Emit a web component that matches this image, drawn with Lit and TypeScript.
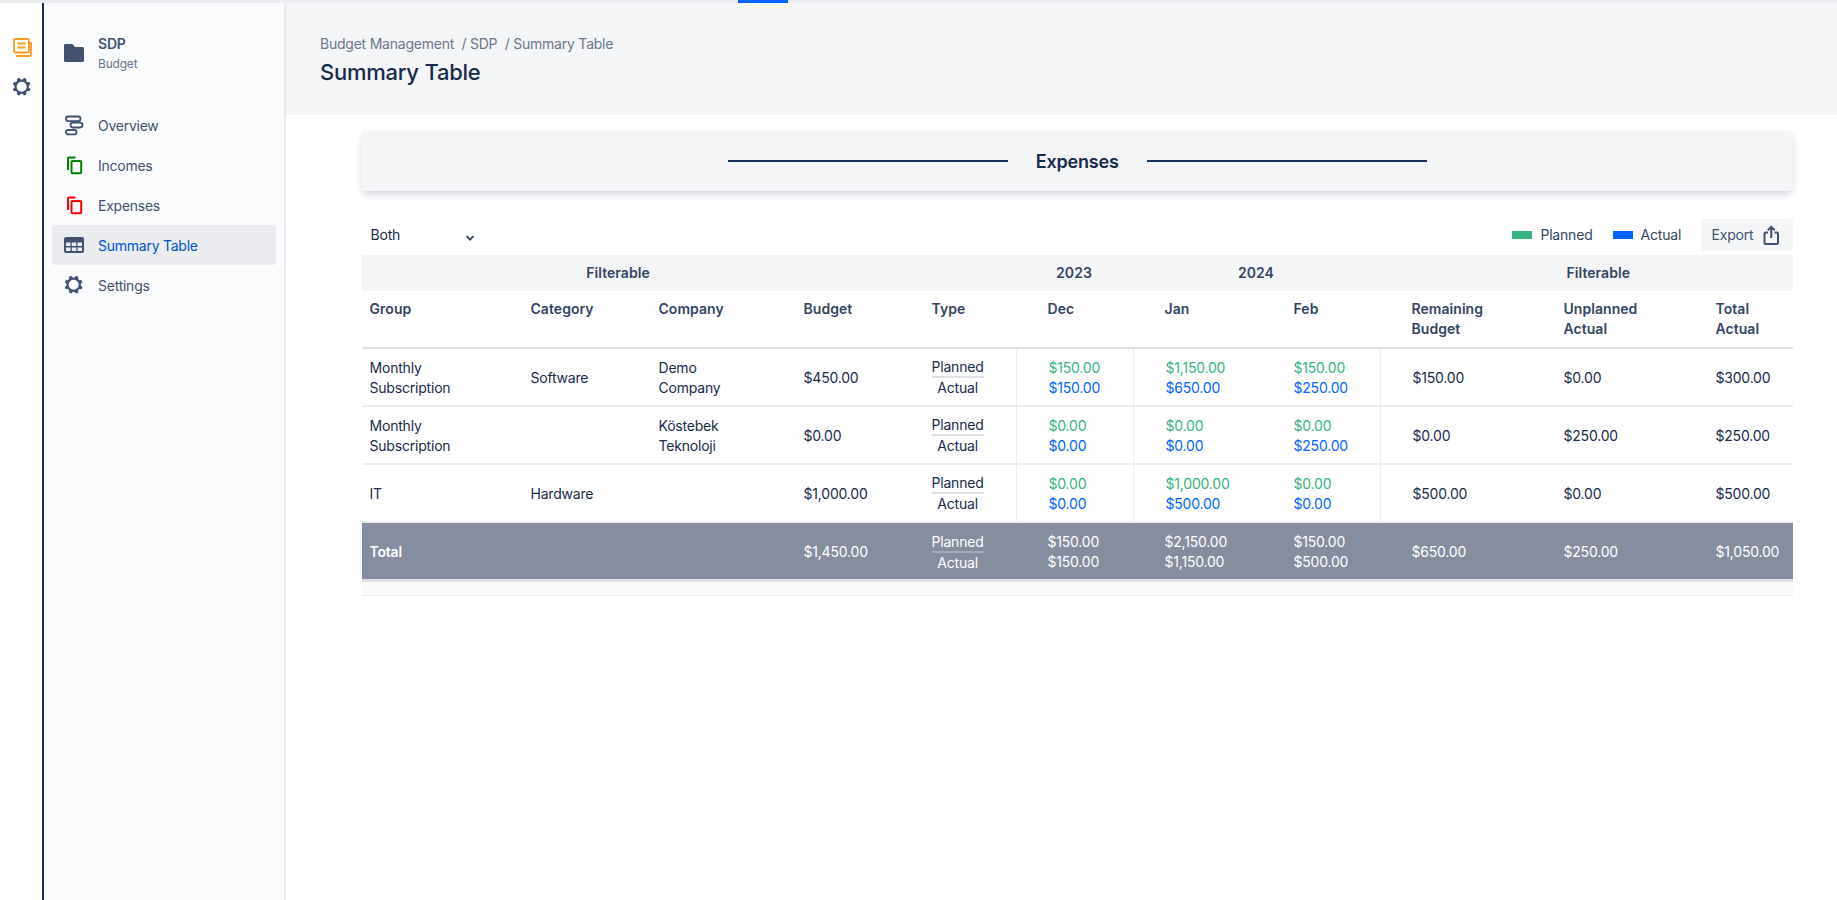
import { LitElement, html, css } from 'lit';
import { customElement } from 'lit/decorators.js';

interface Row {
  group: string[];
  category: string;
  company: string[];
  budget: string;
  dec: [string, string];
  jan: [string, string];
  feb: [string, string];
  remaining: string;
  unplanned: string;
  actual: string;
}

const ROWS: Row[] = [
  {
    group: ['Monthly', 'Subscription'],
    category: 'Software',
    company: ['Demo', 'Company'],
    budget: '$450.00',
    dec: ['$150.00', '$150.00'],
    jan: ['$1,150.00', '$650.00'],
    feb: ['$150.00', '$250.00'],
    remaining: '$150.00',
    unplanned: '$0.00',
    actual: '$300.00',
  },
  {
    group: ['Monthly', 'Subscription'],
    category: '',
    company: ['Köstebek', 'Teknoloji'],
    budget: '$0.00',
    dec: ['$0.00', '$0.00'],
    jan: ['$0.00', '$0.00'],
    feb: ['$0.00', '$250.00'],
    remaining: '$0.00',
    unplanned: '$250.00',
    actual: '$250.00',
  },
  {
    group: ['IT'],
    category: 'Hardware',
    company: [],
    budget: '$1,000.00',
    dec: ['$0.00', '$0.00'],
    jan: ['$1,000.00', '$500.00'],
    feb: ['$0.00', '$0.00'],
    remaining: '$500.00',
    unplanned: '$0.00',
    actual: '$500.00',
  },
];

const TOTAL: Row = {
  group: ['Total'],
  category: '',
  company: [],
  budget: '$1,450.00',
  dec: ['$150.00', '$150.00'],
  jan: ['$2,150.00', '$1,150.00'],
  feb: ['$150.00', '$500.00'],
  remaining: '$650.00',
  unplanned: '$250.00',
  actual: '$1,050.00',
};

const COLS = [161, 128, 145, 128, 92, 117, 129, 118, 176, 152, 85.5];

const gear = html`<svg class="icon" viewBox="0 0 24 24">
  <path
    fill="#42526E"
    fill-rule="evenodd"
    d="M11.701 16.7a5.002 5.002 0 110-10.003 5.002 5.002 0 010 10.004m8.368-3.117a1.995 1.995 0 01-1.346-1.885c0-.876.563-1.613 1.345-1.885a.48.48 0 00.315-.574 8.947 8.947 0 00-.836-1.993.477.477 0 00-.598-.195 2.04 2.04 0 01-1.29.08 1.988 1.988 0 01-1.404-1.395 2.04 2.04 0 01.076-1.297.478.478 0 00-.196-.597 8.98 8.98 0 00-1.975-.826.479.479 0 00-.574.314 1.995 1.995 0 01-1.885 1.346 1.994 1.994 0 01-1.884-1.345.482.482 0 00-.575-.315c-.708.2-1.379.485-2.004.842a.47.47 0 00-.198.582A2.002 2.002 0 014.445 7.06a.478.478 0 00-.595.196 8.946 8.946 0 00-.833 1.994.48.48 0 00.308.572 1.995 1.995 0 011.323 1.877c0 .867-.552 1.599-1.324 1.877a.479.479 0 00-.308.57 8.99 8.99 0 00.723 1.79.477.477 0 00.624.194c.595-.273 1.343-.264 2.104.238.117.077.225.185.302.3.527.8.512 1.58.198 2.188a.473.473 0 00.168.628 8.946 8.946 0 002.11.897.474.474 0 00.57-.313 1.995 1.995 0 011.886-1.353c.878 0 1.618.567 1.887 1.353a.475.475 0 00.57.313 8.964 8.964 0 002.084-.883.473.473 0 00.167-.631c-.318-.608-.337-1.393.191-2.195.077-.116.185-.225.302-.302.772-.511 1.527-.513 2.125-.23a.477.477 0 00.628-.19 8.925 8.925 0 00.728-1.793.478.478 0 00-.314-.573"
  />
</svg>`;

const docs = html`<svg class="icon" viewBox="0 0 24 24" fill="none" stroke="#FF991F" stroke-width="1.800">
  <rect x="4" y="4" width="15" height="13.500" rx="1.500" />
  <path d="M7.500 8.500h8M7.500 12.500h8" />
  <path d="M21 7v12.500a1.500 1.500 0 0 1-1.500 1.500H6" />
</svg>`;

const folder = html`<svg class="icon" viewBox="0 0 24 24">
  <path fill="#42526E" d="M3.500 3h6.200c.5 0 .9.2 1.200.6L13 6h7.500c.8 0 1.500.7 1.500 1.500v12c0 .8-.7 1.500-1.500 1.500h-17C2.700 21 2 20.300 2 19.500v-15C2 3.700 2.700 3 3.500 3z" />
</svg>`;

const overview = html`<svg class="icon" viewBox="0 0 24 24" fill="none" stroke="#42526E" stroke-width="1.800">
  <rect x="4" y="3.500" width="14.500" height="4.600" rx="2.300" />
  <rect x="8.500" y="9.700" width="12" height="4.800" rx="2.400" />
  <rect x="4" y="17" width="10.500" height="4.400" rx="2.200" />
</svg>`;

const pages = (color: string) => html`<svg class="icon" viewBox="0 0 24 24" fill="none" stroke=${color} stroke-width="2">
  <rect x="9.500" y="8" width="9.700" height="12.300" rx="1" />
  <path d="M6 17V5.500a1 1 0 0 1 1-1h6.500" />
</svg>`;

const grid = html`<svg class="icon" viewBox="0 0 24 24">
  <rect x="2" y="4" width="20" height="16" rx="2" fill="#42526E" />
  <path
    fill="#EBECF0"
    d="M4 9.500h4.500V13H4zM9.800 9.500h4.500V13H9.800zM15.500 9.500H20V13h-4.500zM4 14.500h4.500V18H4zM9.800 14.500h4.500V18H9.800zM15.500 14.500H20V18h-4.500z"
  />
</svg>`;

const share = html`<svg class="icon" viewBox="0 0 24 24" fill="none" stroke="#42526E" stroke-width="2">
  <path d="M8 9.500H5.500a1 1 0 0 0-1 1V20a1 1 0 0 0 1 1H17a1 1 0 0 0 1-1v-9.500a1 1 0 0 0-1-1h-2.500" />
  <path d="M11.250 15V4M7.800 7.200l3.450-3.400 3.450 3.400" />
</svg>`;

@customElement('app-root')
export class AppRoot extends LitElement {
  static styles = css`
    :host {
      display: block;
      height: 900px;
      overflow: hidden;
      background: #fff;
      color: #172b4d;
      font-family: Inter, 'Liberation Sans', sans-serif;
      font-size: 14px;
      line-height: 20px;
      letter-spacing: -0.2px;
    }
    .topbar {
      height: 3px;
      background: #ebecf0;
      padding-left: 738px;
    }
    .topbar i {
      display: block;
      width: 50px;
      height: 3px;
      background: #0065ff;
    }
    .shell {
      display: flex;
      height: 897px;
    }
    .icon {
      display: block;
      flex: none;
      width: 24px;
      height: 24px;
    }
    .rail {
      flex: none;
      width: 32px;
      padding: 32px 0 0 10px;
      border-right: 2px solid #1b3158;
      display: flex;
      flex-direction: column;
      gap: 16px;
    }
    .side {
      flex: none;
      box-sizing: border-box;
      width: 242px;
      padding: 31px 8px 0;
      background: #fafbfc;
      border-right: 2px solid #ebecf0;
    }
    .project {
      display: flex;
      align-items: flex-start;
      gap: 12px;
      padding-left: 10px;
      margin-bottom: 33px;
    }
    .project .icon {
      margin-top: 7px;
    }
    .project b {
      display: block;
      font-weight: 600;
      color: #42526e;
    }
    .project span {
      display: block;
      margin-top: 2px;
      font-size: 12px;
      line-height: 16px;
      color: #6b778c;
    }
    .nav {
      display: flex;
      align-items: center;
      gap: 12px;
      height: 40px;
      padding-left: 10px;
      border-radius: 3px;
      color: #42526e;
      letter-spacing: -0.25px;
    }
    .nav span {
      padding-top: 1px;
    }
    .nav.active {
      background: #ebecf0;
      color: #0052cc;
    }
    .main {
      flex: 1;
      min-width: 0;
    }
    .head {
      height: 112px;
      box-sizing: border-box;
      padding: 31px 34px 0;
      background: #f4f5f7;
    }
    .crumbs {
      color: #6b778c;
      white-space: pre;
      letter-spacing: -0.23px;
    }
    h1 {
      margin: 4px 0 0;
      font-size: 22px;
      line-height: 28px;
      font-weight: 500;
      letter-spacing: -0.25px;
      color: #172b4d;
    }
    .content {
      padding: 16px 44px 0 75.5px;
    }
    .card {
      height: 60px;
      display: flex;
      align-items: center;
      justify-content: center;
      gap: 28px;
      background: #f4f5f7;
      border-radius: 3px;
      box-shadow: 0 4px 8px -2px rgba(9, 30, 66, 0.25);
      font-size: 18px;
      font-weight: 600;
    }
    .card i {
      width: 280px;
      height: 2px;
      background: #1b3158;
    }
    .card span {
      padding-top: 2px;
    }
    .toolbar {
      display: flex;
      align-items: center;
      margin-top: 28px;
      height: 32px;
    }
    .filter {
      position: relative;
      width: 120px;
      margin-right: auto;
    }
    .filter select {
      appearance: none;
      width: 100%;
      border: 0;
      background: transparent;
      padding: 4px 9px;
      font: inherit;
      letter-spacing: inherit;
      color: #172b4d;
    }
    .filter svg {
      position: absolute;
      right: 6px;
      top: 11px;
      width: 12px;
      height: 12px;
      pointer-events: none;
    }
    .legend {
      display: flex;
      align-items: center;
      gap: 8px;
      margin-right: 20px;
      color: #344563;
    }
    .legend i {
      width: 20px;
      height: 8px;
    }
    .export {
      display: flex;
      align-items: center;
      gap: 6.5px;
      height: 32px;
      padding: 0 9px 0 10.5px;
      border: 0;
      border-radius: 3px;
      background: #f4f5f7;
      font: inherit;
      letter-spacing: inherit;
      color: #42526e;
    }
    table {
      margin-top: 4px;
      width: 1431.5px;
      table-layout: fixed;
      border-collapse: separate;
      border-spacing: 0;
    }
    th {
      text-align: left;
      font-weight: 600;
      letter-spacing: 0.05px;
      color: #344563;
      padding: 8px;
      vertical-align: top;
    }
    .band th {
      height: 20px;
      background: #f4f5f7;
      text-align: center;
    }
    .band .left {
      padding-right: 57px;
    }
    .labels th {
      border-bottom: 2px solid #dfe1e6;
    }
    td {
      height: 40px;
      padding: 9px 8px 7px;
      border-bottom: 2px solid #ebecf0;
      vertical-align: middle;
    }
    td.tc {
      padding: 8px;
    }
    .total td.tc {
      padding: 9px 8px 7px;
    }
    .ml {
      padding-left: 32px;
    }
    .ml.line {
      border-left: 1px solid #ebecf0;
    }
    .type {
      display: inline-block;
      vertical-align: middle;
      text-align: center;
    }
    .type span {
      display: block;
      line-height: 19px;
      border-bottom: 2px solid #dfe1e6;
    }
    .type em {
      display: block;
      font-style: normal;
      line-height: 19px;
    }
    .pl {
      display: block;
      color: #36b37e;
    }
    .ac {
      display: block;
      color: #0065ff;
    }
    .total td {
      background: #858d9f;
      color: #fff;
      border-bottom: 3px solid #dfe1e6;
    }
    .total .pl,
    .total .ac {
      color: #fff;
    }
    .total .type span {
      border-bottom-color: #a5abb8;
    }
    .total b {
      font-weight: 600;
    }
    .foot td {
      height: 13px;
      padding: 0;
      background: #fafafa;
      border-bottom: 1px solid #ebecf0;
    }
  `;

  private _amounts(v: [string, string]) {
    return html`<span class="pl">${v[0]}</span><span class="ac">${v[1]}</span>`;
  }

  private _lines(v: string[]) {
    return v.map((t, i) => html`${i ? html`<br />` : ''}${t}`);
  }

  private _row(r: Row, total = false) {
    const lineCls = total ? 'ml' : 'ml line';
    return html`<tr class=${total ? 'total' : ''}>
      <td>${total ? html`<b>${r.group[0]}</b>` : this._lines(r.group)}</td>
      <td>${r.category}</td>
      <td>${this._lines(r.company)}</td>
      <td>${r.budget}</td>
      <td class="tc">
        <div class="type"><span>Planned</span><em>Actual</em></div>
      </td>
      <td class=${lineCls}>${this._amounts(r.dec)}</td>
      <td class=${lineCls}>${this._amounts(r.jan)}</td>
      <td class="ml">${this._amounts(r.feb)}</td>
      <td class=${lineCls}>${r.remaining}</td>
      <td>${r.unplanned}</td>
      <td>${r.actual}</td>
    </tr>`;
  }

  render() {
    return html`
      <div class="topbar"><i></i></div>
      <div class="shell">
        <div class="rail">${docs}${gear}</div>
        <div class="side">
          <div class="project">
            ${folder}
            <div><b>SDP</b><span>Budget</span></div>
          </div>
          <div class="nav">${overview}<span>Overview</span></div>
          <div class="nav">${pages('#008000')}<span>Incomes</span></div>
          <div class="nav">${pages('#FF0000')}<span>Expenses</span></div>
          <div class="nav active">${grid}<span>Summary Table</span></div>
          <div class="nav">${gear}<span>Settings</span></div>
        </div>
        <div class="main">
          <div class="head">
            <div class="crumbs">Budget Management  / SDP  / Summary Table</div>
            <h1>Summary Table</h1>
          </div>
          <div class="content">
            <div class="card"><i></i><span>Expenses</span><i></i></div>
            <div class="toolbar">
              <div class="filter">
                <select>
                  <option>Both</option>
                  <option>Planned</option>
                  <option>Actual</option>
                </select>
                <svg viewBox="0 0 12 12" fill="none" stroke="#344563" stroke-width="1.700">
                  <path d="M2.500 4.200l3.500 3.500 3.500-3.500" />
                </svg>
              </div>
              <div class="legend"><i style="background:#36B37E"></i>Planned</div>
              <div class="legend"><i style="background:#0065FF"></i>Actual</div>
              <button class="export">Export ${share}</button>
            </div>
            <table>
              <colgroup>
                ${COLS.map((w) => html`<col style="width:${w}px" />`)}
              </colgroup>
              <thead>
                <tr class="band">
                  <th class="left" colspan="4">Filterable</th>
                  <th></th>
                  <th>2023</th>
                  <th colspan="2">2024</th>
                  <th class="ml" colspan="3">Filterable</th>
                </tr>
                <tr class="labels">
                  <th>Group</th>
                  <th>Category</th>
                  <th>Company</th>
                  <th>Budget</th>
                  <th>Type</th>
                  <th class="ml">Dec</th>
                  <th class="ml">Jan</th>
                  <th class="ml">Feb</th>
                  <th class="ml">Remaining<br />Budget</th>
                  <th>Unplanned<br />Actual</th>
                  <th>Total<br />Actual</th>
                </tr>
              </thead>
              <tbody>
                ${ROWS.map((r) => this._row(r))} ${this._row(TOTAL, true)}
                <tr class="foot"><td colspan="11"></td></tr>
              </tbody>
            </table>
          </div>
        </div>
      </div>
    `;
  }
}
